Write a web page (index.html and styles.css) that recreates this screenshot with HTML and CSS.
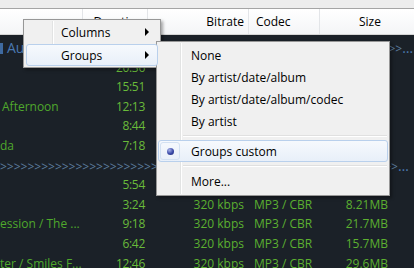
FILE: index.html
```html
<!DOCTYPE html>
<html lang="en">
<head>
  <meta charset="UTF-8">
  <title>Playlist view</title>
  <link rel="stylesheet" href="styles.css">
</head>
<body>
  <div class="app">
    <div class="topbar"></div>

    <div class="grid header">
      <div class="hcell"></div>
      <div class="hcell hright">Duration</div>
      <div class="hcell hright">Bitrate</div>
      <div class="hcell hleft">Codec</div>
      <div class="hcell hcenter">Size</div>
    </div>

    <div class="list">
      <div class="grid group first">
        <div class="group-text"><span class="bar"></span>Au<span class="arrows">gust Fields &gt;&gt;&gt;&gt;&gt;&gt;&gt;&gt;&gt;&gt;&gt;&gt;&gt;&gt;&gt;&gt;&gt;&gt;&gt;&gt;&gt;&gt;&gt;&gt;&gt;&gt;&gt;&gt;&gt;&gt;&gt;&gt;&gt;&gt;&gt;&gt;&gt;&gt;&gt;&gt;&gt;&gt;&gt;&gt;&gt;&gt;&gt;&gt;&gt;&gt;&gt;&gt;&gt;&gt;&gt;&gt;&gt;&gt;&gt;&gt;</span></div>
      </div>
      <div class="grid row">
        <div class="title"></div><div class="time">20:36</div><div class="rate">320 kbps</div><div class="codec">MP3 / CBR</div><div class="size">47.2MB</div>
      </div>
      <div class="grid row">
        <div class="title"></div><div class="time">15:51</div><div class="rate">320 kbps</div><div class="codec">MP3 / CBR</div><div class="size">36.3MB</div>
      </div>
      <div class="grid row">
        <div class="title pad">Afternoon</div><div class="time">12:13</div><div class="rate">320 kbps</div><div class="codec">MP3 / CBR</div><div class="size">28.0MB</div>
      </div>
      <div class="grid row">
        <div class="title"></div><div class="time">8:44</div><div class="rate">320 kbps</div><div class="codec">MP3 / CBR</div><div class="size">20.0MB</div>
      </div>
      <div class="grid row">
        <div class="title">da</div><div class="time">7:18</div><div class="rate">320 kbps</div><div class="codec">MP3 / CBR</div><div class="size">16.7MB</div>
      </div>
      <div class="grid group">
        <div class="group-text"><span class="arrows">&gt;&gt;&gt;&gt;&gt;&gt;&gt;&gt;&gt;&gt;&gt;&gt;&gt;&gt;&gt;&gt;&gt;&gt;&gt;&gt;&gt;&gt;&gt;&gt;&gt;&gt;&gt;&gt;&gt;&gt;&gt;&gt;&gt;&gt;&gt;&gt;&gt;&gt;&gt;&gt;&gt;&gt;&gt;&gt;&gt;&gt;&gt;&gt;&gt;&gt;&gt;&gt;&gt;&gt;&gt;&gt;&gt;&gt;&gt;&gt;&gt;&gt;&gt;&gt;&gt;&gt;&gt;&gt;</span></div>
      </div>
      <div class="grid row">
        <div class="title"></div><div class="time">5:54</div><div class="rate">320 kbps</div><div class="codec">MP3 / CBR</div><div class="size">13.5MB</div>
      </div>
      <div class="grid row">
        <div class="title"></div><div class="time">3:24</div><div class="rate">320 kbps</div><div class="codec">MP3 / CBR</div><div class="size">8.21MB</div>
      </div>
      <div class="grid row">
        <div class="title">ession / The ...</div><div class="time">9:18</div><div class="rate">320 kbps</div><div class="codec">MP3 / CBR</div><div class="size">21.7MB</div>
      </div>
      <div class="grid row">
        <div class="title"></div><div class="time">6:42</div><div class="rate">320 kbps</div><div class="codec">MP3 / CBR</div><div class="size">15.7MB</div>
      </div>
      <div class="grid row">
        <div class="title">ter / Smiles F...</div><div class="time">12:46</div><div class="rate">320 kbps</div><div class="codec">MP3 / CBR</div><div class="size">29.6MB</div>
      </div>
    </div>

    <!-- context menu -->
    <div class="menu menu-main">
      <div class="item">
        <span class="label">Columns</span>
        <span class="sub-arrow"></span>
      </div>
      <div class="item active">
        <span class="label">Groups</span>
        <span class="sub-arrow"></span>
      </div>
    </div>

    <!-- Groups submenu -->
    <div class="menu menu-sub">
      <div class="item"><span class="label">None</span></div>
      <div class="item"><span class="label">By artist/date/album</span></div>
      <div class="item"><span class="label">By artist/date/album/codec</span></div>
      <div class="item"><span class="label">By artist</span></div>
      <div class="sep"></div>
      <div class="item active"><span class="check"><span class="dot"></span></span><span class="label">Groups custom</span></div>
      <div class="sep"></div>
      <div class="item"><span class="label">More...</span></div>
    </div>
  </div>
</body>
</html>
```

FILE: styles.css
```css
body {
  margin: 0;
  font-family: "Open Sans", "Noto Sans", sans-serif;
  font-size: 12px;
  background: #1c2229;
}
.app {
  width: 414px;
  height: 268px;
  overflow: hidden;
  position: relative;
  background: #1b2128;
}
.topbar {
  height: 8px;
  background: #ededed;
  border-bottom: 1px solid #a5a5a5;
}
.grid {
  display: grid;
  grid-template-columns: 83px 65px 101px 71px 94px;
}
.header {
  height: 25px;
  background: linear-gradient(#ffffff, #f4f5f7);
  border-bottom: 1px solid #d5d5d5;
  color: #000;
}
.hcell {
  line-height: 25px;
  border-right: 1px solid #e3e5e8;
  padding: 0 4px;
  white-space: nowrap;
  overflow: hidden;
}
.hcell:last-child {
  border-right: none;
}
.hright { text-align: right; }
.hleft { padding-left: 7px; }
.hcenter { text-align: center; padding-left: 10px; }

.list {
  padding-top: 3px;
}
.row, .group {
  height: 19.6px;
  line-height: 19.6px;
  color: #5cb030;
  white-space: nowrap;
}
.title {
  overflow: hidden;
  color: #4fa82c;
}
.title.pad { padding-left: 2px; }
.time {
  text-align: right;
  padding-right: 3px;
  color: #69bb3a;
  letter-spacing: -0.3px;
}
.rate {
  text-align: right;
  padding-right: 5px;
}
.codec {
  padding-left: 5px;
}
.size {
  text-align: right;
  padding-right: 26px;
}
.group-text {
  grid-column: 1 / -1;
  overflow: hidden;
  text-overflow: ellipsis;
  color: #4a78b0;
  font-size: 14px;
}
.group .arrows {
  color: #5c7c9e;
  font-size: 12px;
}
.bar {
  display: inline-block;
  width: 3px;
  height: 11px;
  background: #3f6aa0;
  margin-right: 4px;
  vertical-align: -1px;
}

/* menus */
.menu {
  position: absolute;
  background: #f0f0f0;
  border: 1px solid #979797;
  box-shadow: 2px 2px 3px rgba(0, 0, 0, 0.35);
  color: #000;
}
.menu::before {
  content: "";
  position: absolute;
  top: 1px;
  bottom: 1px;
  width: 1px;
  background: #e2e3e3;
  border-right: 1px solid #fff;
}
.menu-main {
  left: 23px;
  top: 19px;
  width: 136px;
  padding: 1px 0;
}
.menu-main::before { left: 28px; }
.menu-main .item {
  height: 22px;
  margin: 0 2px 1px 2px;
  padding-left: 34px;
}
.menu-main .item:last-child { margin-bottom: 0; }

.menu-sub {
  left: 156px;
  top: 41px;
  width: 232px;
  padding: 2px 0 3px;
}
.menu-sub::before { left: 23px; }
.menu-sub .item {
  height: 22px;
  margin: 0 1px;
  padding-left: 32px;
}

.item {
  position: relative;
  display: flex;
  align-items: center;
  border: 1px solid transparent;
  border-radius: 3px;
  box-sizing: border-box;
  z-index: 1;
}
.item.active {
  background: linear-gradient(#f6f9fd, #e8eff9);
  border-color: #b9d0ec;
}
.label {
  white-space: nowrap;
}
.sub-arrow {
  margin-left: auto;
  margin-right: 8px;
  width: 0;
  height: 0;
  border-top: 4px solid transparent;
  border-bottom: 4px solid transparent;
  border-left: 4px solid #000;
}
.sep {
  height: 1px;
  background: #e0e0e0;
  border-bottom: 1px solid #fff;
  margin: 3px 2px 3px 26px;
}
.check {
  position: absolute;
  left: 1px;
  top: 1px;
  width: 20px;
  height: 18px;
  border-radius: 3px;
  border: 1px solid #d3e1f2;
  box-sizing: border-box;
  display: flex;
  align-items: center;
  justify-content: center;
}
.dot {
  width: 7px;
  height: 7px;
  border-radius: 50%;
  background: radial-gradient(circle at 35% 30%, #a9b4ea, #3a4aa8 55%, #1d2672);
}
```
